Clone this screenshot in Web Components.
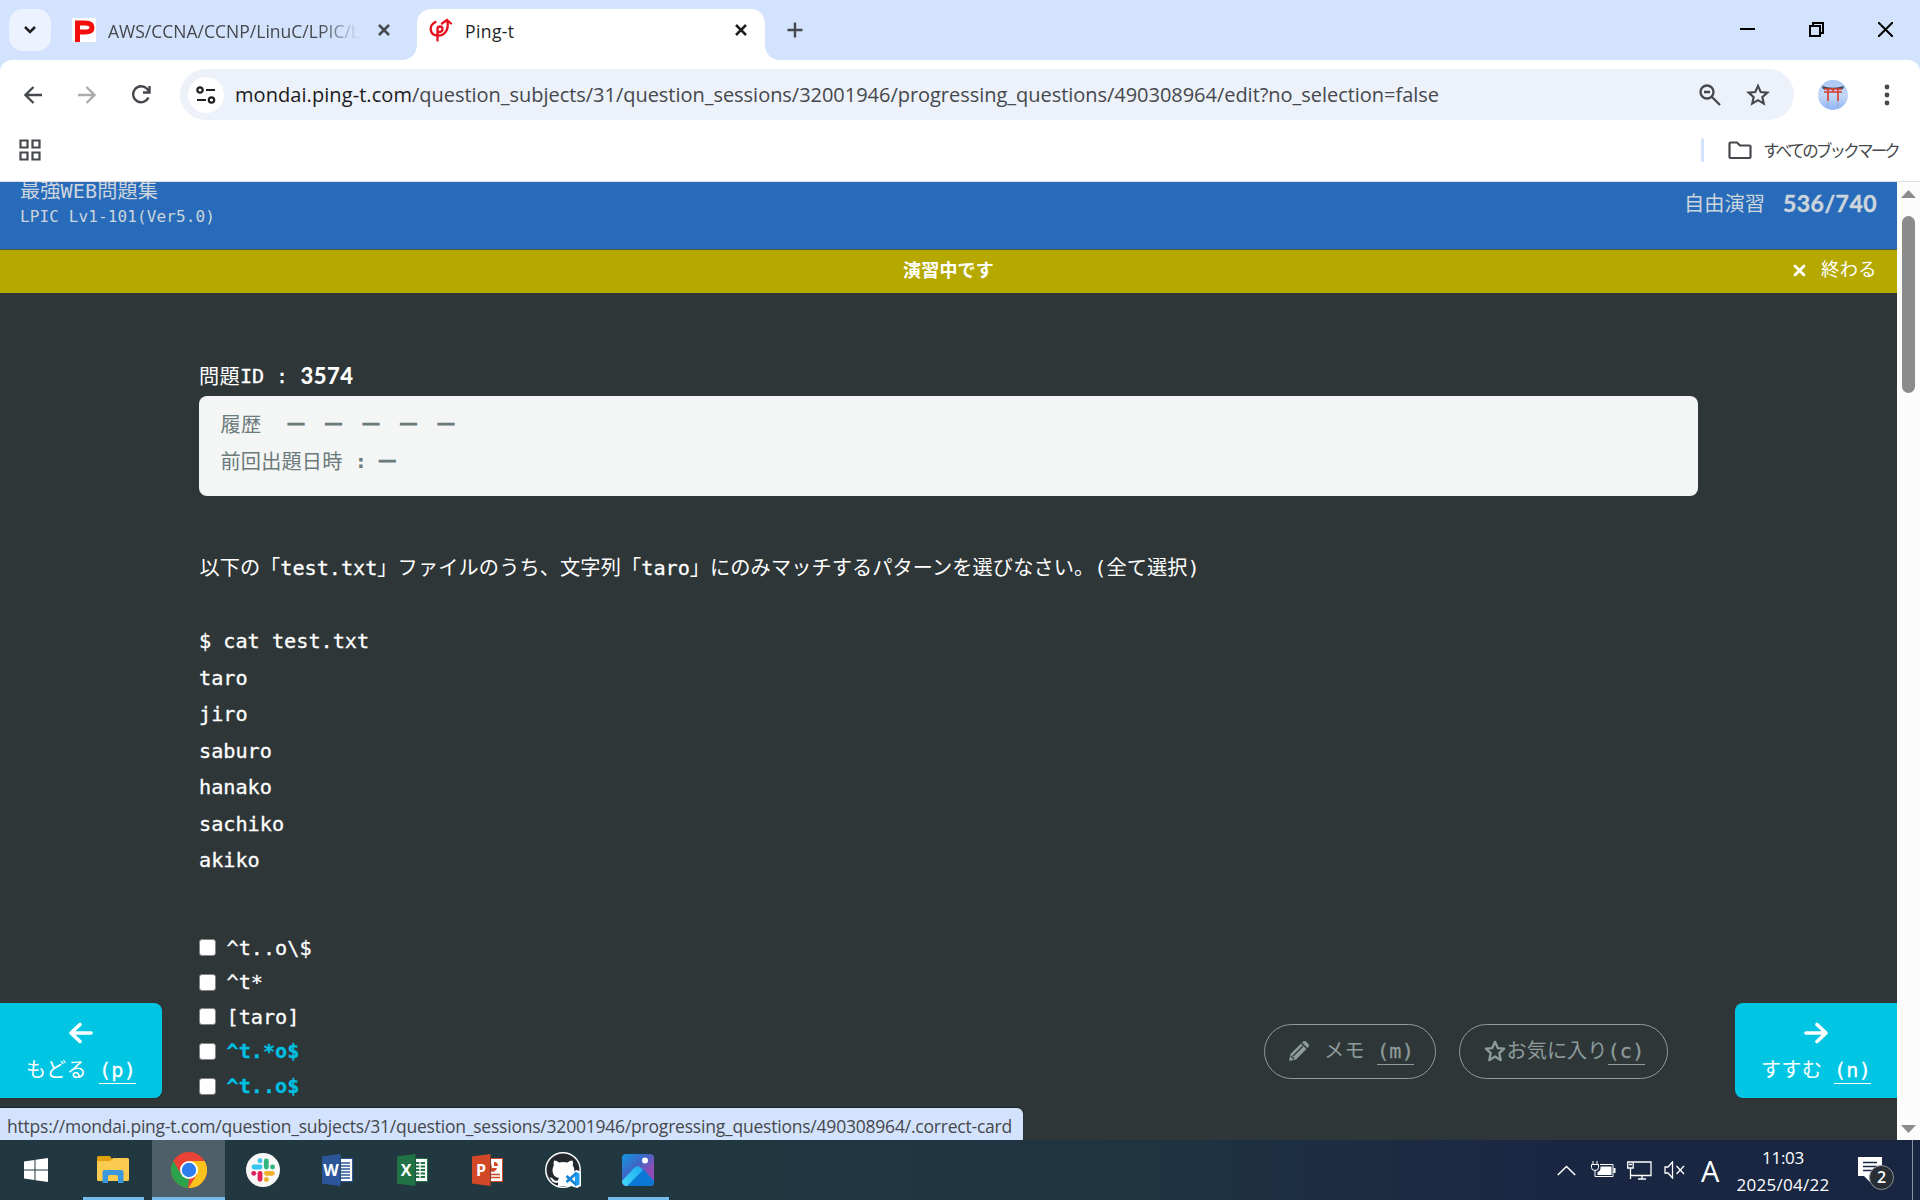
<!DOCTYPE html>
<html lang="ja"><head><meta charset="utf-8"><title>Ping-t</title>
<style>
html,body{margin:0;width:1920px;height:1200px;overflow:hidden;background:#2e3638}
body{font-family:"Open Sans","Noto Sans CJK JP",sans-serif;color:#fff}
</style></head><body>
<desktop-screen></desktop-screen>
<script>
const define=(name,html,hook)=>customElements.define(name,class extends HTMLElement{
  constructor(){super();this.attachShadow({mode:'open'}).innerHTML=html;}
  connectedCallback(){if(hook)hook(this);}
});

/* Single line of text, tracked so that it fills the width given in "w". */
define('ui-text',`<style>:host{display:inline-block;white-space:pre;flex:none}</style><slot></slot>`,el=>{
  const w=+el.getAttribute('w');
  if(!w)return;
  const n=[...el.textContent].length;
  el.style.letterSpacing='0.01px';
  const cur=el.getBoundingClientRect().width;
  el.style.letterSpacing=(0.01+(w-cur)/n)+'px';
});

define('tab-strip',`<style>
:host{display:flex;height:60px;background:#d3e3fd;box-sizing:border-box;align-items:flex-start;font-size:17.5px;color:#45484c}
.drop{width:42px;height:42px;border-radius:14px;background:#ecf2ff;margin:9px 0 0 9px;display:flex;align-items:center;justify-content:center}
.tab{display:flex;align-items:center;height:42px;margin-top:9px}
.idle{margin-left:21px;width:345px}
.idle ui-text,.active ui-text{padding-top:2px}
.fade{margin-left:12px;-webkit-mask-image:linear-gradient(90deg,#000 84%,transparent)}
.idle .x{margin-left:17px}
.active{background:#fff;width:348px;height:51px;border-radius:14px 14px 0 0;color:#1f1f1f;position:relative;box-sizing:border-box;padding:0 0 9px 12px}
.active::before,.active::after{content:"";position:absolute;bottom:0;width:14px;height:14px}
.active::before{left:-14px;background:radial-gradient(circle at 0 0,transparent 13.5px,#fff 14px)}
.active::after{right:-14px;background:radial-gradient(circle at 100% 0,transparent 13.5px,#fff 14px)}
.active ui-text{margin-left:12px}.active .x{margin-left:219px}
.plus{margin:21px 0 0 21px}
.win{margin-left:auto;display:flex;gap:54px;margin-right:27px;margin-top:22px}
svg{display:block;flex:none}
</style>
<div class="drop"><svg width="14" height="10" viewBox="0 0 14 10"><path d="M2 2l5 5 5-5" fill="none" stroke="#1f1f1f" stroke-width="2.5"/></svg></div>
<div class="tab idle"><svg width="24" height="24"><path fill="#fff" d="M0 0h24v24H0z"/><path d="M5.500 24V5H13q7 0 7 4.500T13 14H6" fill="none" stroke="#f40d0d" stroke-width="5"/></svg>
<ui-text class="fade" w="252">AWS/CCNA/CCNP/LinuC/LPIC/L</ui-text>
<svg class="x" width="14" height="14"><path d="M2 2l10 10M12 2L2 12" stroke="#45484c" stroke-width="2.5"/></svg></div>
<div class="tab active"><svg width="24" height="24" viewBox="0 0 24 24" fill="none" stroke="#e60f1e" stroke-width="2.300" stroke-linecap="round"><path d="M6.500 4Q1 7 1.800 12c1 7 12 8 16 0Q19.500 8 18.200 2.500M13 5.500l5-3.500 4 3.500M8.500 22.500V11q0-2.500 2.500-2.500t2.500 2.500-2.500 3H8.500"/></svg>
<ui-text w="49.500">Ping-t</ui-text>
<svg class="x" width="14" height="14"><path d="M2 2l10 10M12 2L2 12" stroke="#1f1f1f" stroke-width="2.500"/></svg></div>
<svg class="plus" width="18" height="18"><path d="M9 1.500v15M1.500 9h15" stroke="#45484c" stroke-width="2.400"/></svg>
<div class="win"><svg width="15" height="15"><path d="M0 7h15" stroke="#000" stroke-width="2"/></svg>
<svg width="15" height="15" fill="none" stroke="#000" stroke-width="2"><path d="M1 4h10v10H1zM4 4V1h10v10h-3"/></svg>
<svg width="15" height="15"><path d="M0 0l15 15M15 0L0 15" stroke="#000" stroke-width="2"/></svg></div>`);

define('tool-bar',`<style>
:host{display:block;background:#d3e3fd}
.in{display:flex;align-items:center;height:69px;background:#fff;border-radius:12px 12px 0 0;box-sizing:border-box;padding:0 27px 0 24px;font-size:20px}
svg{display:block;flex:none}
.pill{display:flex;align-items:center;background:#ecf1fa;border-radius:26px;height:51px;width:1614px;box-sizing:border-box;padding:0 24px 0 8px;margin-left:29px}
.tune{width:36px;height:36px;border-radius:50%;background:#fff;display:flex;align-items:center;justify-content:center}
.url{margin-left:11px;color:#45484c}.host{color:#1a1b1d}
.zoom{margin-left:auto}
</style><div class="in">
<svg width="18" height="18" fill="none" stroke="#45484c" stroke-width="2.300"><path d="M18 9H2M9.500 1L1.500 9l8 8"/></svg>
<svg style="margin-left:36px" width="18" height="18" fill="none" stroke="#a9abad" stroke-width="2.300"><path d="M0 9h16M8.500 1l8 8-8 8"/></svg>
<svg style="margin-left:36px" width="19" height="19" fill="none" stroke="#45484c" stroke-width="2.400"><path d="M16.500 12.500A8 8 0 1 1 15 3.800l2 2M17.500 1v6.500H11"/></svg>
<div class="pill"><div class="tune"><svg width="20" height="18" fill="none" stroke="#1f1f1f" stroke-width="2.200"><circle cx="4" cy="4" r="2.700"/><path d="M10 4h9M1 14h9"/><circle cx="15.500" cy="14" r="2.700"/></svg></div>
<div class="url"><ui-text class="host" w="177">mondai.ping-t.com</ui-text><ui-text w="1027">/question_subjects/31/question_sessions/32001946/progressing_questions/490308964/edit?no_selection=false</ui-text></div>
<svg class="zoom" width="22" height="22" fill="none" stroke="#45484c" stroke-width="2.300"><circle cx="8" cy="8" r="6.500"/><path d="M5 8h6M12.500 12.500L21 21"/></svg>
<svg style="margin-left:25px" width="24" height="24" viewBox="0 0 24 24" fill="none" stroke="#45484c" stroke-width="2.100"><path d="M12 2.800l2.700 6.200 6.700.6-5.100 4.500 1.500 6.600L12 17.200l-5.800 3.500 1.500-6.600L2.600 9.600 9.300 9z"/></svg></div>
<svg style="margin-left:24px" width="30" height="30"><defs><linearGradient id="g" x2="0" y2="1"><stop stop-color="#a9c6f5"/><stop offset=".5" stop-color="#c5d9f6"/><stop offset="1" stop-color="#8fb5f8"/></linearGradient></defs><circle cx="15" cy="15" r="15" fill="url(#g)"/><path d="M4 6q11 3.500 22 0l-1 3H5z" fill="#3f4a56"/><path d="M6 12h18M10 9v12M20 9v12M15 8v4M6 9h18" stroke="#d9402f" stroke-width="1.700"/><path d="M10 22v5M20 22v5" stroke="#9aa3c9"/></svg>
<svg style="margin-left:36px" width="6" height="22" fill="#45484c"><circle cx="3" cy="3" r="2.400"/><circle cx="3" cy="11" r="2.400"/><circle cx="3" cy="19" r="2.400"/></svg>
</div>`);

define('bookmark-bar',`<style>
:host{display:flex;height:53px;box-sizing:border-box;align-items:center;background:#fff;border-bottom:1px solid #dcdee2;padding:0 22px 10px 19px;color:#45484c;font:16.500px "Noto Sans CJK JP",sans-serif}
svg{display:block;flex:none}.sep{width:3px;height:24px;background:#d3e3fd;border-radius:2px;margin-left:auto}
.f{margin:0 11px 0 24px}
</style><svg width="22" height="22" fill="none" stroke="#45484c" stroke-width="2.200"><path d="M1.500 1.500h7v7h-7zM13.500 1.500h7v7h-7zM1.500 13.500h7v7h-7zM13.500 13.500h7v7h-7z"/></svg>
<div class="sep"></div><svg class="f" width="24" height="19" fill="none" stroke="#45484c" stroke-width="2.200"><path d="M1.500 2.500q0-1 1-1h6.500l3 3h9.500q1 0 1 1V16q0 1-1 1h-19q-1 0-1-1z"/></svg><ui-text w="135">すべてのブックマーク</ui-text>`);

define('quiz-header',`<style>
:host{display:flex;justify-content:space-between;height:67px;background:#276bba;color:#cdd5dd;overflow:hidden;border-bottom:1px solid #4a5a4c}
.l{margin:-4px 0 0 20px;display:flex;flex-direction:column;align-items:flex-start}
.a{font-size:20.200px;line-height:26px}.b{font-size:16px;line-height:26px}
.r{display:flex;height:41px;align-items:center;margin-right:20px;font-size:20.200px;gap:18px}
.n{font:700 23px Lato,sans-serif;-webkit-text-stroke:.4px}
</style><div class="l"><ui-text class="a" w="138">最強WEB問題集</ui-text><ui-text class="b" w="195">LPIC Lv1-101(Ver5.0)</ui-text></div>
<div class="r"><ui-text w="81">自由演習</ui-text><ui-text class="n" w="94">536/740</ui-text></div>`);

define('status-banner',`<style>
:host{display:grid;grid-template-columns:1fr auto 1fr;height:43px;background:#b5a900;align-items:center;line-height:24px;font-size:18.300px;padding-bottom:3px;box-sizing:border-box}
b{grid-column:2;font-family:"Noto Sans CJK JP",sans-serif;font-size:18px;padding-bottom:2px}
.e{display:flex;justify-content:flex-end;align-items:center;gap:15px;padding-right:20px}
</style><b><ui-text w="91">演習中です</ui-text></b><div class="e"><svg width="13" height="13"><path d="M2 2l9 9M11 2l-9 9" stroke="#fff" stroke-width="2.800" stroke-linecap="round"/></svg><ui-text w="56">終わる</ui-text></div>`);

define('history-card',`<style>
:host{display:block;width:1499px;height:100px;box-sizing:border-box;border-radius:8px;background:#f4f6f5;color:#6b7a7a;padding:9px 21.500px;margin-top:5px}
div{display:flex;align-items:center;height:37px}
.d{font:700 16px/37px "Liberation Sans",sans-serif;margin-right:21.500px;-webkit-text-stroke:1.200px #6b7a7a}.f{margin-right:26.500px}
</style><div><ui-text class="f" w="41">履歴</ui-text><ui-text class="d">—</ui-text><ui-text class="d">—</ui-text><ui-text class="d">—</ui-text><ui-text class="d">—</ui-text><ui-text class="d">—</ui-text></div>
<div><ui-text w="122">前回出題日時</ui-text><ui-text style="margin:0 12.5px 0 0;font-weight:700"> :</ui-text><ui-text class="d">—</ui-text></div>`);

define('answer-option',`<style>
:host{display:flex;align-items:center;height:34.600px;gap:10.500px}
i{width:17px;height:17px;box-sizing:border-box;border:1px solid #858585;border-radius:3px;background:#fff}
:host([correct]){color:#00bfe0;font-weight:700}
</style><i></i><ui-text><slot></slot></ui-text>`);

define('quiz-body',`<style>
:host{display:flex;flex-direction:column;align-items:flex-start;padding:67px 0 0 199px}
.id{height:31px;display:flex;align-items:center}
.n{font:900 22px Lato,sans-serif;margin-left:12.500px}
.q{height:37px;line-height:37px;margin-top:54px;display:flex;padding-left:.5px;text-spacing-trim:space-all}
.m,.out{-webkit-text-stroke:.3px}
.out{margin-top:36px}.out div{height:36.550px;line-height:36.550px}
.opts{margin-top:51.500px;-webkit-text-stroke:.3px}
</style><div class="id"><ui-text w="41">問題</ui-text><ui-text class="m" w="48">ID :</ui-text><ui-text class="n" w="53">3574</ui-text></div>
<history-card></history-card>
<div class="q"><ui-text w="80.800">以下の「</ui-text><ui-text class="m" w="97">test.txt</ui-text><ui-text w="264">」ファイルのうち、文字列「</ui-text><ui-text class="m" w="48.500">taro</ui-text><ui-text w="510">」にのみマッチするパターンを選びなさい。(全て選択)</ui-text></div>
<div class="out"><div>$ cat test.txt</div><div>taro</div><div>jiro</div><div>saburo</div><div>hanako</div><div>sachiko</div><div>akiko</div></div>
<div class="opts"><answer-option>^t..o\\$</answer-option><answer-option>^t*</answer-option><answer-option>[taro]</answer-option><answer-option correct>^t.*o$</answer-option><answer-option correct>^t..o$</answer-option></div>`);

define('nav-button',`<style>
:host{position:absolute;top:821px;width:162px;height:95px;background:#00c5e3;border-radius:0 8px 8px 0;left:0;display:flex;flex-direction:column;align-items:center}
:host([next]){left:1735px;border-radius:8px 0 0 8px}
svg{margin-top:19px;display:block}:host([next]) svg{transform:scaleX(-1)}
.t{display:flex;gap:12px;height:28px;line-height:28px;margin-top:12px}
</style><svg width="26" height="22" fill="none" stroke="#fff" stroke-width="3.600" stroke-linecap="round" stroke-linejoin="round"><path d="M12 2.500L3 11l9 8.500M3 11h20"/></svg><div class="t"><slot></slot></div>`);

define('pill-button',`<style>
:host{display:flex;align-items:center;height:55px;box-sizing:border-box;border:1px solid #8d9b9b;border-radius:28px;color:#8d9b9b;line-height:26px;padding-bottom:1px}
</style><slot></slot>`);

define('page-scrollbar',`<style>
:host{display:flex;flex-direction:column;width:23px;background:#fcfcfc;align-items:center;height:958px;flex:none}
.th{width:13px;height:177px;border-radius:7px;background:#8b8b8b;margin-top:18px}.dn{margin-top:auto;margin-bottom:7px}
.up{margin-top:8px}svg{display:block}
</style><svg class="up" width="15" height="8"><path d="M7.500 0L15 8H0z" fill="#8b8b8b"/></svg><div class="th"></div><svg class="dn" width="15" height="8"><path d="M0 0h15L7.500 8z" fill="#8b8b8b"/></svg>`);

define('quiz-page',`<style>
:host{display:flex;height:958px;position:relative;background:#2e3638;font:20.200px "DejaVu Sans Mono","Noto Sans CJK JP",monospace;overflow:hidden}
.m{width:1897px;height:958px;overflow:hidden}
.acts{position:absolute;left:1264px;top:842px;display:flex;gap:23px}
u{text-decoration:none;border-bottom:1px solid currentColor;-webkit-text-stroke:.3px}
.st{position:absolute;left:0;top:926px;width:1023px;height:32px;background:#d3e3fd;border-radius:0 6px 0 0;color:#45484c;font:17.500px/37px "Open Sans",sans-serif;padding-left:7px;box-sizing:border-box;box-shadow:0 -1px 1px #1e2426}
svg{flex:none}
</style><div class="m"><quiz-header></quiz-header><status-banner></status-banner><quiz-body></quiz-body></div><page-scrollbar></page-scrollbar>
<nav-button><ui-text w="61">もどる</ui-text><u><ui-text w="37">(p)</ui-text></u></nav-button>
<nav-button next><ui-text w="61">すすむ</ui-text><u><ui-text w="37">(n)</ui-text></u></nav-button>
<div class="acts"><pill-button style="width:172px;padding-left:23px;box-sizing:border-box"><svg width="22" height="22" fill="#8d9b9b"><path d="M1 21l1.500-7L13 3.500l5.500 5.500L8 19.500zM14.500 2q2-2 4 0l1.500 1.500q2 2 0 4l-.5.500L14 2.500z"/><path d="M5 16L15 6M3 16l3 3" stroke="#2e3638" stroke-width="1.300"/></svg><ui-text style="margin:0 12px 0 14px" w="41">メモ</ui-text><u><ui-text w="37">(m)</ui-text></u></pill-button>
<pill-button style="width:209px;padding-left:23.5px;box-sizing:border-box"><svg width="22" height="22" viewBox="0 0 24 24" fill="none" stroke="#8d9b9b" stroke-width="2.500" stroke-linejoin="round"><path d="M12 2l3 6.800 7 .7-5.300 4.800L18.300 22 12 18l-6.300 4 1.600-7.700L2 9.500l7-.7z"/></svg><ui-text style="margin-left:1px" w="101">お気に入り</ui-text><u><ui-text w="37">(c)</ui-text></u></pill-button></div>
<div class="st"><ui-text w="1005">https://mondai.ping-t.com/question_subjects/31/question_sessions/32001946/progressing_questions/490308964/.correct-card</ui-text></div>`);

define('task-item',`<style>
:host{display:flex;width:75px;height:60px;align-items:center;justify-content:center;position:relative;flex:none}
:host([open])::after{content:"";position:absolute;left:8px;width:61px;bottom:0;height:3px;background:#76b9ed}
:host([current]){background:#4d5f68;width:73px;margin:0 1px}
:host([current])::after{left:0;width:73px}
</style><slot></slot>`);

/* Office tile: coloured cover with its letter, and the sheet behind it. */
define('office-icon',`<style>
:host{display:flex;width:32px;height:32px;align-items:center}
.c{width:19px;height:32px;background:var(--c);clip-path:polygon(0 8%,100% 0,100% 100%,0 92%);display:flex;align-items:center;justify-content:center;font:700 16px "Open Sans",sans-serif;color:#fff}
.s{width:11px;height:22px;border:1.500px solid var(--c);border-left:0;background:#fff;display:flex}
::slotted(svg){display:block}
</style><div class="c"><slot name="l"></slot></div><div class="s"><slot></slot></div>`);

define('task-bar',`<style>
:host{display:flex;height:60px;background:linear-gradient(90deg,#213840 0,#213840 35%,#1f3341 60%,#1a2743 80%,#192642);align-items:center;font-size:17px}
svg{display:block;flex:none}
.tray{margin-left:auto;display:flex;align-items:center}
.clock{display:flex;flex-direction:column;align-items:center;line-height:27px;width:94px;margin:2px 0 0 16px}
.a{font-size:29px;line-height:60px;margin-left:16px;width:19px;margin-top:2px}
.note{width:36px;height:38px;margin-left:28px;position:relative}
.badge{position:absolute;left:11px;top:14px;width:23px;height:23px;border:1px solid #8b929b;border-radius:50%;background:#292d34;font:600 16px/23px "Open Sans",sans-serif;text-align:center}
.end{width:1px;height:60px;background:#8a93a3;margin:0 7px 0 18px}
</style>
<task-item style="width:73px;box-sizing:border-box;padding-right:2px;margin-right:2px"><svg width="24" height="24" fill="#fff"><path d="M0 3.500l10.500-1.500v9.500H0zM11.500 1.800L24 0v11.500H11.500zM0 12.500h10.500V22L0 20.500zM11.500 12.500H24V24l-12.500-1.800z"/></svg></task-item>
<task-item open><svg width="32" height="28"><path d="M0 1.500Q0 0 1.500 0H13l2 3v4H0z" fill="#e0a10b"/><path d="M0 5h13l3-3h14.500Q32 2 32 3.500v20q0 1.500-1.500 1.500h-29Q0 25 0 23.500z" fill="#fbcb50"/><path d="M5.500 27V16q0-2 2-2h17q2 0 2 2v11H21v-6.500q0-1.500-1.500-1.500h-7Q11 19 11 20.500V27z" fill="#3b98dd"/></svg></task-item>
<task-item open current style="margin-left:2px;margin-right:0"><svg width="36" height="36" viewBox="0 0 36 36"><circle cx="18" cy="18" r="18" fill="#ea4335"/><path d="M2.400 9l7.800 13.500L18 27l-1 9A18 18 0 0 1 2.400 9z" fill="#2ba24c"/><path d="M18 9h15.600A18 18 0 0 1 17.500 36l8.300-13.500z" fill="#fcc31e"/><circle cx="18" cy="18" r="9" fill="#fff"/><circle cx="18" cy="18" r="7.200" fill="#2c7df0"/></svg></task-item>
<task-item><svg width="34" height="34" viewBox="0 0 34 34"><circle cx="17" cy="17" r="17" fill="#f7f7f7"/><g stroke-width="4.800" stroke-linecap="round" fill="none"><path d="M8 14h6" stroke="#36c5f0"/><path d="M14 7.700v.1" stroke="#36c5f0"/><path d="M20.300 8v6" stroke="#2eb67d"/><path d="M26.500 14h.1" stroke="#2eb67d"/><path d="M20.300 20.300h6" stroke="#ecb22e"/><path d="M20.300 26.500h.1" stroke="#ecb22e"/><path d="M14 20.300v6" stroke="#e01e5a"/><path d="M7.700 20.300h.1" stroke="#e01e5a"/></g></svg></task-item>
<task-item><office-icon style="--c:#2b579a"><span slot="l">W</span><svg width="10" height="22"><path d="M0 4h9M0 7h9M0 10h9M0 13h9M0 16h9M0 19h9" stroke="#2b579a" stroke-width="1.500"/></svg></office-icon></task-item>
<task-item><office-icon style="--c:#217346"><span slot="l">X</span><svg width="10" height="22"><path d="M0 4h9M0 7.500h9M0 11h9M0 14.500h9M0 18h9" stroke="#217346" stroke-width="2"/><path d="M4 2v18" stroke="#fff" stroke-width="1.300"/></svg></office-icon></task-item>
<task-item><office-icon style="--c:#d24726"><span slot="l">P</span><svg width="10" height="22"><path d="M0 4a4.500 4.500 0 1 0 6 5H1z" fill="#d24726"/><path d="M3 3v4h4a4 4 0 0 0-4-4" fill="#d24726"/><path d="M0 15.500h9M0 18.500h9" stroke="#d24726" stroke-width="1.500"/></svg></office-icon></task-item>
<task-item><svg width="36" height="36" viewBox="0 0 36 36"><circle cx="18" cy="18" r="17.200" fill="#24292e" stroke="#fff" stroke-width="1.500"/><path d="M9 8.500q3 0 5 2 4-1 8.500 0 2-2 5-2 1 3 .3 5 2 2.500 1.500 6-.8 5-6.300 6.200 1 1 1 3V34H13v-3.500q-5 1-6.500-2.500-1-2-2.300-2.500 3-.5 4.300 2 1.500 2 4.500 1 0-1.500 1-2.500-6-1-6.500-7 0-3.500 1.300-5.500-.7-2 .2-5z" fill="#fff"/><path d="M20 22l12-4 4 2v14l-4 2-12-4z" fill="#fff"/><path d="M30 19.500l4.500 2v11l-4.500 2z" fill="#1f9cf0"/><path d="M31 21.500L21.500 30M31 32.500L21.500 24" fill="none" stroke="#1584d4" stroke-width="2.800"/></svg></task-item>
<task-item open><svg width="32" height="32"><defs><linearGradient id="p" x1="0" y1="0" x2="1" y2="1"><stop stop-color="#1297e0"/><stop offset=".4" stop-color="#3e66c7"/><stop offset=".7" stop-color="#8f4db5"/></linearGradient><linearGradient id="q" x1="1" y1="0" x2="0" y2="1"><stop stop-color="#20aef0"/><stop offset="1" stop-color="#42d8fa"/></linearGradient><clipPath id="k"><rect width="32" height="32" rx="4"/></clipPath></defs><g clip-path="url(#k)"><path d="M0 0h32v32H0z" fill="url(#p)"/><path d="M4 32L18 15q3-1 5 2l9 10v5z" fill="#0b78d6"/><path d="M-1 28L12 14q3.500-3.500 7 0l2 2L4 33z" fill="url(#q)"/><circle cx="23" cy="6.500" r="3" fill="#fff"/></g></svg></task-item>
<div class="tray">
<svg width="19" height="11" fill="none" stroke="#fff" stroke-width="1.500"><path d="M.8 10l8.700-8.500L18.200 10"/></svg>
<svg style="margin-left:15px" width="25" height="18"><path d="M2 0v4M6 0v4" stroke="#fff"/><path d="M.5 3.500h7v3q0 3-3.500 3T.5 6.500zM4 9v6.500h3" stroke="#fff" fill="none"/><path d="M9 3.500h13v12H6" fill="none" stroke="#fff"/><path d="M9.500 5.500h11v8.500H6.500v-3Q9.500 10 9.500 7zM22.500 7h2v5h-2z" fill="#fff"/></svg>
<svg style="margin-left:11px" width="25" height="19" fill="none" stroke="#fff" stroke-width="1.300"><path d="M6 1h18v13.500H4M.7 1h5.500v6H.7zM3.500 7v11M15 14.500V18M11 18h8M2 3.500h3"/></svg>
<svg style="margin-left:12px" width="21" height="18" fill="none" stroke="#fff" stroke-width="1.300"><path d="M1 6h3l4.500-5v16L4 12H1zM12.500 5l7.500 8M20 5l-7.500 8"/></svg>
<span class="a">A</span>
<div class="clock"><ui-text w="42">11:03</ui-text><ui-text w="93">2025/04/22</ui-text></div>
<div class="note"><svg width="26" height="26" style="margin-top:6px"><path d="M0 0h24v19h-12v6l-6-6H0z" fill="#fff"/><path d="M5 5.500h14M5 9.500h14M5 13.500h9" stroke="#1a2742" stroke-width="1.300"/></svg><span class="badge">2</span></div>
<div class="end"></div></div>`);

define('desktop-screen',`<style>:host{display:flex;flex-direction:column;width:1920px;height:1200px;overflow:hidden}</style>
<tab-strip></tab-strip><tool-bar></tool-bar><bookmark-bar></bookmark-bar><quiz-page></quiz-page><task-bar></task-bar>`);
</script>
</body></html></script>
